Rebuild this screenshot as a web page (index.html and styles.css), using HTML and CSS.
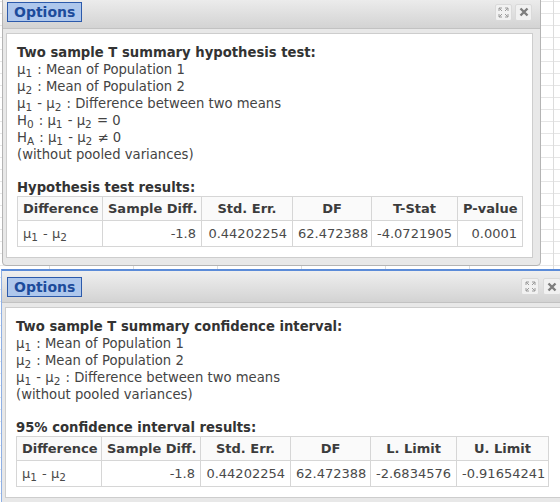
FILE: index.html
```html
<!DOCTYPE html>
<html>
<head>
    <title>Two sample T summary</title>
    <link rel="stylesheet" href="styles.css">
</head>
<body>
    <div class="window window-test">
        <div class="titlebar">
            <span class="options">Options</span>
            <div class="tools">
                <span class="tool">
                    <svg width="11" height="11" viewBox="0 0 11 11"><path d="M1 4V1h3M1 1l3 3M7 1h3v3M10 1L7 4M1 7v3h3M1 10l3-3M10 7v3H7M10 10L7 7" fill="none" stroke="#9a9a9a" stroke-width="1"/></svg>
                </span>
                <span class="tool">
                    <svg width="10" height="10" viewBox="0 0 10 10"><path d="M1.5 1.5l7 7M8.5 1.5l-7 7" stroke="#7d7d7d" stroke-width="2.4"/></svg>
                </span>
            </div>
        </div>
        <div class="panel">
            <div class="title">Two sample T summary hypothesis test:</div>
            <div>&mu;<sub>1</sub> : Mean of Population 1</div>
            <div>&mu;<sub>2</sub> : Mean of Population 2</div>
            <div>&mu;<sub>1</sub> - &mu;<sub>2</sub> : Difference between two means</div>
            <div>H<sub>0</sub> : &mu;<sub>1</sub> - &mu;<sub>2</sub> = 0</div>
            <div>H<sub>A</sub> : &mu;<sub>1</sub> - &mu;<sub>2</sub> &ne; 0</div>
            <div>(without pooled variances)</div>
            <div class="title results">Hypothesis test results:</div>
            <table class="results-table table-test">
                <colgroup>
                    <col style="width:85px"><col style="width:99px"><col style="width:91px">
                    <col style="width:79px"><col style="width:86px"><col style="width:65px">
                </colgroup>
                <tr>
                    <th>Difference</th><th>Sample Diff.</th><th>Std. Err.</th><th>DF</th><th>T-Stat</th><th>P-value</th>
                </tr>
                <tr>
                    <td class="name">&mu;<sub>1</sub> - &mu;<sub>2</sub></td>
                    <td>-1.8</td><td>0.44202254</td><td>62.472388</td><td>-4.0721905</td><td>0.0001</td>
                </tr>
            </table>
        </div>
    </div>

    <div class="window window-interval">
        <div class="titlebar">
            <span class="options">Options</span>
            <div class="tools">
                <span class="tool">
                    <svg width="11" height="11" viewBox="0 0 11 11"><path d="M1 4V1h3M1 1l3 3M7 1h3v3M10 1L7 4M1 7v3h3M1 10l3-3M10 7v3H7M10 10L7 7" fill="none" stroke="#9a9a9a" stroke-width="1"/></svg>
                </span>
                <span class="tool">
                    <svg width="10" height="10" viewBox="0 0 10 10"><path d="M1.5 1.5l7 7M8.5 1.5l-7 7" stroke="#7d7d7d" stroke-width="2.4"/></svg>
                </span>
            </div>
        </div>
        <div class="panel">
            <div class="title">Two sample T summary confidence interval:</div>
            <div>&mu;<sub>1</sub> : Mean of Population 1</div>
            <div>&mu;<sub>2</sub> : Mean of Population 2</div>
            <div>&mu;<sub>1</sub> - &mu;<sub>2</sub> : Difference between two means</div>
            <div>(without pooled variances)</div>
            <div class="title results">95% confidence interval results:</div>
            <table class="results-table table-interval">
                <colgroup>
                    <col style="width:85px"><col style="width:99px"><col style="width:90px">
                    <col style="width:80px"><col style="width:86px"><col style="width:92px">
                </colgroup>
                <tr>
                    <th>Difference</th><th>Sample Diff.</th><th>Std. Err.</th><th>DF</th><th>L. Limit</th><th>U. Limit</th>
                </tr>
                <tr>
                    <td class="name">&mu;<sub>1</sub> - &mu;<sub>2</sub></td>
                    <td>-1.8</td><td>0.44202254</td><td>62.472388</td><td>-2.6834576</td><td>-0.91654241</td>
                </tr>
            </table>
        </div>
    </div>
</body>
</html>
```

FILE: styles.css
```css
body {
    margin: 0;
    height: 502px;
    overflow: hidden;
    font-family: "DejaVu Sans", Verdana, sans-serif;
    font-size: 13.2px;
    line-height: 17px;
    color: #444;
    background-color: #fff;
    background-image:
        linear-gradient(90deg, #dcdcdc 1px, transparent 1px),
        linear-gradient(#e6e6e6 1px, transparent 1px);
    background-size: 84px 100%, 100% 12px;
    background-position: 49px 0, 0 1px;
}
.window {
    box-sizing: border-box;
    background-color: #e8e8e8;
    border: 1px solid #b4b4b4;
    border-radius: 4px;
    padding: 0 7px 7px 3px;
}
.window-test {
    width: 539px;
    margin: -5px 0 0 2px;
}
.window-interval {
    width: 571px;
    margin: 3px 0 0 1px;
    border-color: #8fb0e4;
    border-top: 2px solid #5b8bd8;
    border-radius: 0;
}
.titlebar {
    display: flex;
    justify-content: space-between;
    align-items: center;
    height: 32px;
    margin: 0 -7px 0 -3px;
    padding: 0 8px 0 4px;
    background: linear-gradient(#efefef, #d3d3d3);
    border-bottom: 1px solid #c2c2c2;
    border-radius: 4px 4px 0 0;
}
.window-interval .titlebar {
    height: 31px;
    padding: 0 10px 0 5px;
    border-radius: 0;
}
.options {
    display: inline-block;
    height: 18px;
    line-height: 18px;
    padding: 0 6px;
    border: 1px solid #2c5aab;
    background-color: #aec7ec;
    color: #1c4b9b;
    font-size: 14px;
    font-weight: bold;
}
.tools {
    display: flex;
    gap: 3px;
}
.tool {
    display: flex;
    align-items: center;
    justify-content: center;
    width: 15px;
    height: 15px;
    background-color: #f1f1f1;
    border: 1px solid #dadada;
    border-radius: 2px;
}
.window-interval .tools {
    gap: 4px;
}
.window-interval .tool {
    width: 16px;
}
.panel {
    margin-top: 4px;
    padding: 10px;
    background-color: #fff;
    border: 1px solid #cdcdcd;
}
.title {
    font-weight: bold;
    color: #333;
}
.results {
    margin-top: 16px;
}
sub {
    font-size: 10.5px;
    line-height: 0;
    vertical-align: -3px;
    padding-right: 1px;
}
.results-table {
    border-collapse: collapse;
    table-layout: fixed;
    font-size: 13px;
}
.table-test {
    width: 506px;
}
.table-interval {
    width: 533px;
}
.results-table th,
.results-table td {
    border: 1px solid #d6d6d6;
    padding: 3px 5px;
    white-space: nowrap;
    overflow: hidden;
}
.results-table th {
    font-weight: bold;
    color: #3c3c3c;
    background-color: #fafafa;
    text-align: center;
}
.results-table td {
    padding: 4px 5px;
    text-align: right;
    color: #4a4a4a;
}
.results-table td.name {
    text-align: left;
}
```
